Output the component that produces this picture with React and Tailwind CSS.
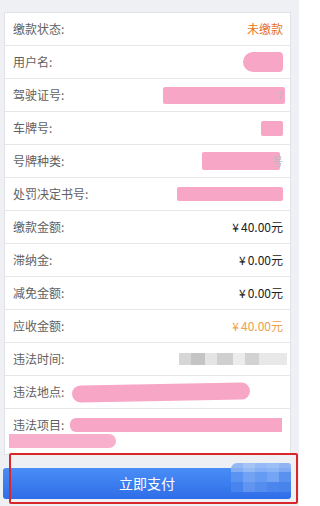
import React from "react";

const rows = [
  { label: "缴款状态:", value: "未缴款", tone: "text-[#e8731c]" },
  { label: "用户名:", blur: { w: 40, h: 20, r: "rounded-l-[10px] rounded-r-[4px]" } },
  { label: "驾驶证号:", blur: { w: 122, h: 17 }, tail: "7" },
  { label: "车牌号:", blur: { w: 22, h: 15 } },
  { label: "号牌种类:", blur: { w: 78, h: 18 }, tail: "号" },
  { label: "处罚决定书号:", blur: { w: 106, h: 14 } },
  { label: "缴款金额:", value: "40.00元", yen: true },
  { label: "滞纳金:", value: "0.00元", yen: true },
  { label: "减免金额:", value: "0.00元", yen: true },
  { label: "应收金额:", value: "40.00元", yen: true, tone: "text-[#f0a04a]" },
];

function Blur({ w, h, r = "rounded-[2px]" }) {
  return <div className={`bg-[#f7a6c6] ${r}`} style={{ width: w, height: h }} />;
}

function Row({ row }) {
  return (
    <div className="flex h-[33px] items-center justify-between border-b border-[#e6e6ea] pl-2 pr-[7px]">
      <span className="text-[12px] text-[#5f5f5f]">{row.label}</span>
      {row.value && (
        <span className={`text-[12px] ${row.tone || "text-[#222]"}`}>
          {row.yen && <span className="mr-[2px]">¥</span>}
          {row.value}
        </span>
      )}
      {row.blur && (
        <div className="flex items-center">
          <Blur {...row.blur} />
          {row.tail && <span className="-ml-2 text-[11px] text-[#bbb]">{row.tail}</span>}
        </div>
      )}
    </div>
  );
}

export default function App() {
  return (
    <div
      className="relative h-[506px] w-[299px] overflow-hidden bg-[#eef0f4] pt-3"
      style={{ fontFamily: '"Noto Sans CJK SC", "Noto Sans", sans-serif' }}
    >
      <div className="ml-1 w-[287px] border border-[#e2e3e8] bg-white">
        {rows.map((row) => (
          <Row key={row.label} row={row} />
        ))}

        {/* 违法时间 */}
        <div className="flex h-[33px] items-center justify-between border-b border-[#e6e6ea] pl-2 pr-[3px]">
          <span className="text-[12px] text-[#5f5f5f]">违法时间:</span>
          <div className="flex h-[12px] w-[108px]">
            <div className="w-[12px] bg-[#d6d6d6]" />
            <div className="w-[14px] bg-[#c4c4c4]" />
            <div className="w-[12px] bg-[#e4e4e4]" />
            <div className="w-[16px] bg-[#cfcfcf]" />
            <div className="w-[12px] bg-[#ececec]" />
            <div className="w-[14px] bg-[#d2d2d2]" />
            <div className="w-[28px] bg-[#e8e8e8]" />
          </div>
        </div>

        {/* 违法地点 */}
        <div className="flex h-[33px] items-center border-b border-[#e6e6ea] pl-2">
          <span className="text-[12px] text-[#5f5f5f]">违法地点:</span>
          <div className="ml-2 h-[17px] w-[178px] -rotate-1 rounded-full bg-[#f7a6c6]" />
        </div>

        {/* 违法项目 */}
        <div className="flex h-[45px] flex-col pl-1 pt-[7px]">
          <div className="flex items-center pl-1">
            <span className="text-[12px] text-[#5f5f5f]">违法项目:</span>
            <div className="ml-[6px] h-[14px] w-[212px] rounded-l-[6px] bg-[#f7a6c6]" />
          </div>
          <div className="h-[14px] w-[107px] rounded-r-full bg-[#f7a6c6] opacity-90" />
        </div>
      </div>

      <div className="relative ml-[3px] mt-[13px] w-[288px]">
        <button className="flex h-[31px] w-full items-center justify-center rounded-[3px] bg-gradient-to-b from-[#4a8df5] to-[#2f6de8] text-[14px] text-white">
          立即支付
        </button>
        <div className="absolute right-0 top-[-5px] grid grid-cols-5 opacity-90">
          <div className="h-[9px] w-[12px] rounded-tl-[6px] bg-[#8ab2f5]" />
          <div className="h-[9px] w-[12px] bg-[#9dc0f7]" />
          <div className="h-[9px] w-[12px] bg-[#8db5f6]" />
          <div className="h-[9px] w-[12px] bg-[#94baf7]" />
          <div className="h-[9px] w-[12px] rounded-tr-[3px] bg-[#86aef3]" />
          <div className="h-[10px] w-[12px] bg-[#5d95f2]" />
          <div className="h-[10px] w-[12px] bg-[#78a6f4]" />
          <div className="h-[10px] w-[12px] bg-[#6a9ef3]" />
          <div className="h-[10px] w-[12px] bg-[#7aa8f5]" />
          <div className="h-[10px] w-[12px] bg-[#5b93f0]" />
          <div className="h-[10px] w-[12px] bg-[#4a86ee]" />
          <div className="h-[10px] w-[12px] bg-[#6598f1]" />
          <div className="h-[10px] w-[12px] bg-[#5890ef]" />
          <div className="h-[10px] w-[12px] bg-[#4d88ee]" />
          <div className="h-[10px] w-[12px] bg-[#4a85ec]" />
        </div>
      </div>

      {/* red annotation frame */}
      <div className="pointer-events-none absolute left-[9px] top-[453px] h-[51px] w-[289px] rounded-[2px] border-2 border-[#d9262b]" />
    </div>
  );
}
